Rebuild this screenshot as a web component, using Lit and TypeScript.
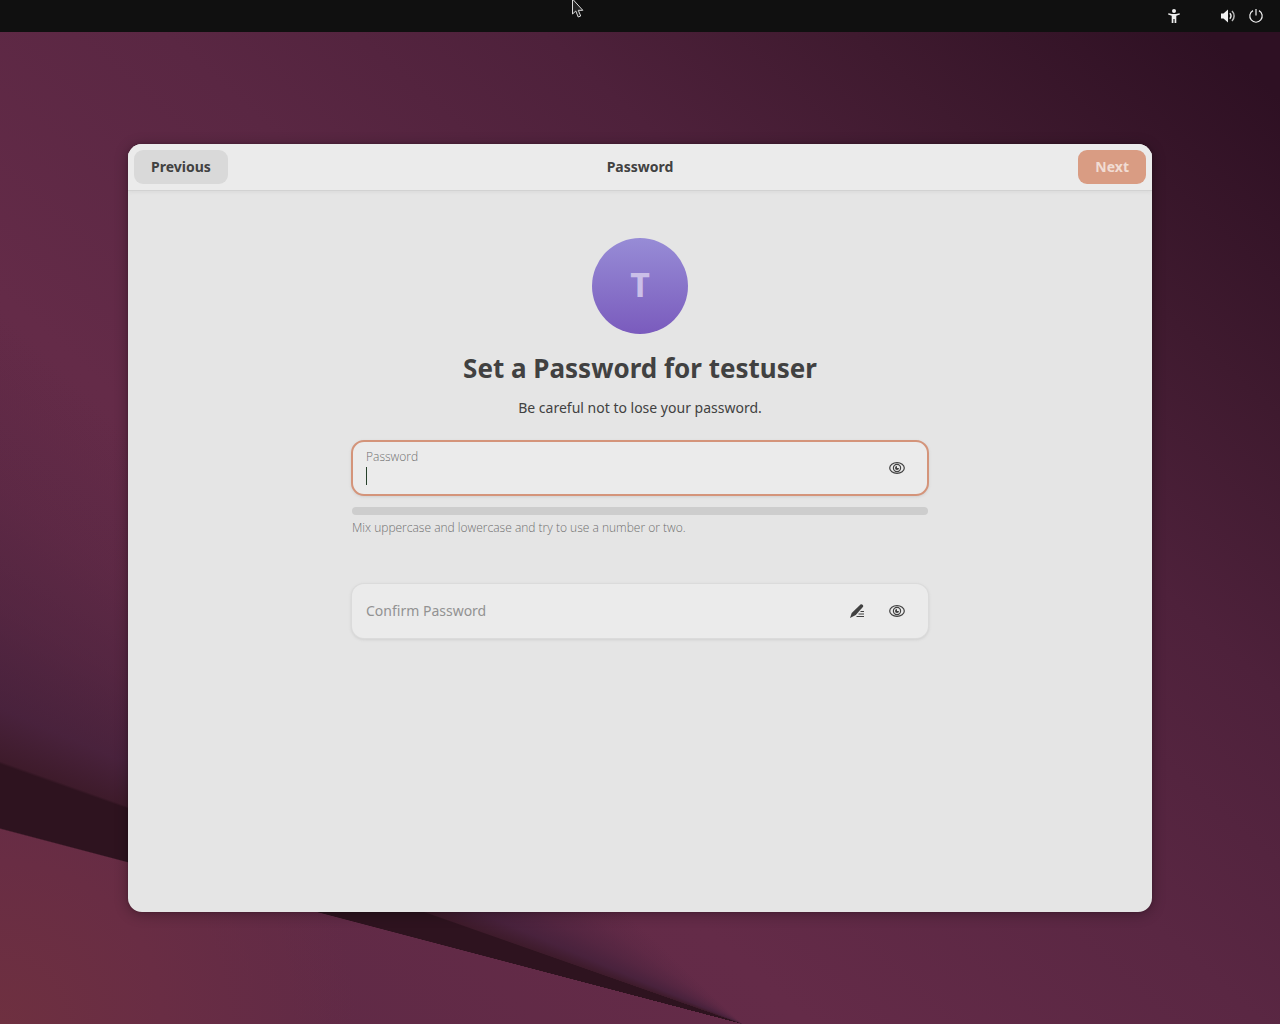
import { LitElement, html, css, svg } from "lit";
import { customElement } from "lit/decorators.js";

const icon = (body: unknown, size = 16) =>
  html`<svg class="icon" width=${size} height=${size} viewBox="0 0 16 16" aria-hidden="true">${body}</svg>`;

const accessibilityIcon = icon(svg`
  <circle cx="8" cy="3" r="2" fill="currentColor"/>
  <path d="M2.400 5.300 6 6h4l3.600-.7.3 1.200L10.300 7.700V15H8.600v-4H7.400v4H5.700V7.700L2.100 6.500z" fill="currentColor"/>`);

const volumeIcon = icon(svg`
  <path d="M1 5.500h2.500L8 1.500v13l-4.500-4H1z" fill="currentColor"/>
  <path d="M9.800 5.300a4 4 0 0 1 0 5.400" fill="none" stroke="currentColor" stroke-width="1.400"/>
  <path d="M12 3a7 7 0 0 1 0 10" fill="none" stroke="currentColor" stroke-width="1.500" opacity=".75"/>`);

const powerIcon = icon(svg`
  <path d="M5 2.600a6.200 6.200 0 1 0 6 0M8 1v6.500" fill="none" stroke="currentColor" stroke-width="1.200"/>`);

const eyeIcon = icon(svg`
  <ellipse cx="8" cy="8" rx="7.300" ry="5.400" fill="none" stroke="currentColor" stroke-width="1.200"/>
  <circle cx="8" cy="8" r="3.600" fill="none" stroke="currentColor" stroke-width="1.200"/>
  <path d="M8 6a2 2 0 1 0 2 2H8z" fill="currentColor"/>`);

const pencilIcon = icon(svg`
  <path d="M11.500 1.500c1.200-.8 3.300.8 2.600 2.300L6.800 12 1 15l1.700-5.100z" fill="currentColor"/>
  <path d="M11.500 8.500H15M9.500 11H15M7.500 13.500H15" stroke="currentColor" fill="none"/>`);

@customElement("app-root")
export class AppRoot extends LitElement {
  static styles = css`
    :host {
      display: flex;
      flex-direction: column;
      min-height: 100vh;
      color: #414141;
      font: 14px/20px "Noto Sans", sans-serif;
      background: #50233c;
    }
    * { box-sizing: border-box; }
    button, input { font: inherit; color: inherit; border: 0; }
    .icon { display: block; }

    .topbar {
      display: flex;
      justify-content: flex-end;
      align-items: center;
      height: 32px;
      padding: 0 16px;
      background: #101010;
      color: #f0f0f0;
    }
    .status { display: flex; gap: 12px; padding: 0; background: none; }
    .access { padding: 0; margin-right: 38px; background: none; }
    .pointer { position: absolute; left: 571px; top: 0; }

    .stage {
      flex: 1;
      display: flex;
      padding: 112px 10%;
      background:
        conic-gradient(from 0deg at 58% 100%,
          transparent 284.700deg, #2e131f 284.800deg, #2e131f 289.300deg,
          #3e1b2b 289.500deg, #43203ad0 293deg, #43203a70 299deg, #43203a28 306deg, transparent 314deg),
        radial-gradient(circle at 0 100%, #6e3040, #692d44 10%, transparent 22%),
        linear-gradient(42deg, #602a46 12%, #642b48 34%, #5a2743 53%, #4e213b 69%, #3f1a2f 82%, #2e1023 97%);
    }
    .window {
      flex: 1;
      display: flex;
      flex-direction: column;
      border-radius: 14px;
      overflow: hidden;
      background: #e5e5e5;
      box-shadow: 0 2px 14px rgba(0, 0, 0, .3), 0 0 3px rgba(0, 0, 0, .2);
    }
    .header {
      display: grid;
      grid-template-columns: 1fr auto 1fr;
      align-items: center;
      padding: 6px;
      background: #ebebeb;
      box-shadow: 0 1px #d2d2d2, 0 2px 4px #d8d8d8;
      font-weight: 700;
    }
    .title { margin: 0; font-size: 14px; }
    .nav { height: 34px; padding: 0 17px; border-radius: 9px; font-weight: 700; }
    .previous { justify-self: start; background: #d9d9d9; }
    .next { justify-self: end; background: #d99c83; color: #f1dcd3; }

    .page {
      display: flex;
      flex-direction: column;
      align-items: center;
      padding: 48px 24px;
    }
    .avatar {
      display: grid;
      place-items: center;
      width: 96px;
      height: 96px;
      padding-bottom: 4px;
      border-radius: 50%;
      background: linear-gradient(#978cd6, #7a5bbd);
      color: #cbbfe8;
      font-size: 34px;
      font-weight: 700;
    }
    .heading { margin: 16px 0 12px; font-size: 26px; line-height: 36px; }
    .lead { margin: 0; }
    .form { width: 100%; max-width: 576px; margin-top: 23px; }
    .row {
      display: flex;
      align-items: center;
      gap: 6px;
      height: 54px;
      padding: 0 14px;
      border-radius: 12px;
      background: #ebebeb;
      box-shadow: 0 0 0 1px #dbdbdb, 0 1px 3px 1px #d0d0d0;
    }
    .row.active { outline: 2px solid #d4947a; outline-offset: -1px; }
    .field { flex: 1; display: flex; flex-direction: column; padding-bottom: 2px; }
    .caption, .hint {
      color: #707070;
      font: 300 12px/18px "Open Sans", "Noto Sans", sans-serif;
    }
    .line { display: flex; align-items: center; height: 20px; }
    .caret { width: 1px; height: 18px; background: #26402a; }
    .input { flex: 1; min-width: 0; padding: 0; background: transparent; outline: none; }
    .input::placeholder { color: #929292; opacity: 1; }
    .tool {
      display: grid;
      place-items: center;
      width: 34px;
      height: 34px;
      padding: 0;
      background: none;
    }
    .strength { height: 8px; margin-top: 12px; border-radius: 4px; background: #cdcdcd; }
    .hint { margin: 4px 0 47px; }
  `;

  render() {
    return html`
      <header class="topbar">
        <button class="access" aria-label="Accessibility">${accessibilityIcon}</button>
        <button class="status" aria-label="System">${volumeIcon}${powerIcon}</button>
      </header>
      <main class="stage">
        <section class="window">
          <div class="header">
            <button class="nav previous">Previous</button>
            <h1 class="title">Password</h1>
            <button class="nav next" disabled>Next</button>
          </div>
          <div class="page">
            <div class="avatar">T</div>
            <h2 class="heading">Set a Password for testuser</h2>
            <p class="lead">Be careful not to lose your password.</p>
            <form class="form">
              <div class="row active">
                <div class="field">
                  <label class="caption" for="password">Password</label>
                  <div class="line">
                    <span class="caret"></span>
                    <input class="input" id="password" type="password" />
                  </div>
                </div>
                <button class="tool" type="button" aria-label="Show password">${eyeIcon}</button>
              </div>
              <div class="strength" role="meter" aria-label="Password strength" aria-valuenow="0"></div>
              <p class="hint">Mix uppercase and lowercase and try to use a number or two.</p>
              <div class="row">
                <input class="input" type="password" aria-label="Confirm Password" placeholder="Confirm Password" />
                <button class="tool" type="button" aria-label="Edit">${pencilIcon}</button>
                <button class="tool" type="button" aria-label="Show confirmation">${eyeIcon}</button>
              </div>
            </form>
          </div>
        </section>
      </main>
      <svg class="pointer" width="14" height="20" viewBox="0 0 14 20" aria-hidden="true">
        <path d="M1.500-1v15l3.300-3 2.400 6 2.500-1-2.400-5.700h4.500z" fill="#242424" stroke="#dcdcdc"/>
      </svg>
    `;
  }
}
